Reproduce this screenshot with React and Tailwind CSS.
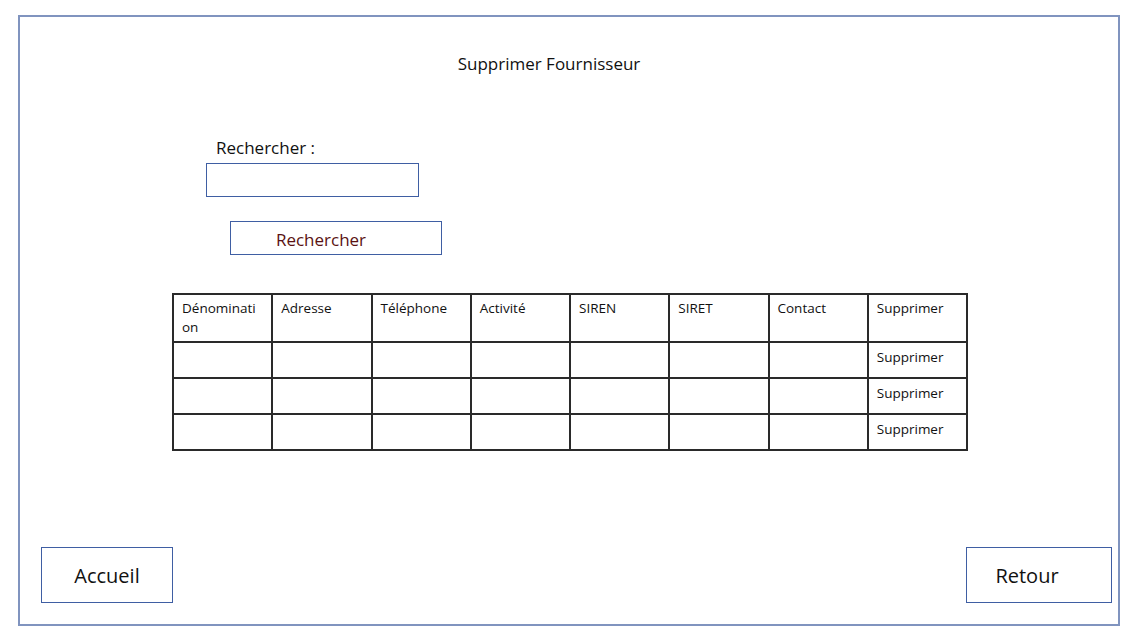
const columns = [
  "Dénominati on",
  "Adresse",
  "Téléphone",
  "Activité",
  "SIREN",
  "SIRET",
  "Contact",
  "Supprimer",
];

function Row() {
  return (
    <tr className="h-[36px]">
      {columns.slice(0, 7).map((c) => (
        <td key={c} className="border-2 border-[#2a2a2a]" />
      ))}
      <td className="border-2 border-[#2a2a2a] px-[8px] align-top pt-[5px]">
        Supprimer
      </td>
    </tr>
  );
}

export default function App() {
  return (
    <div className="h-[637px] w-[1132px] bg-white pl-[18px] pt-[15px] font-['Open_Sans',sans-serif] text-[#111]">
      <div className="flex h-[611px] w-[1102px] flex-col border-2 border-[#8094bf]">
        <h1 className="mt-[35px] pr-[40px] text-center text-[17px] leading-[24px]">
          Supprimer Fournisseur
        </h1>

        <div className="ml-[186px] mt-[60px] flex flex-col">
          <label className="ml-[10px] text-[17px] leading-[24px]">Rechercher :</label>
          <div className="mt-[3px] h-[34px] w-[213px] border border-[#3f5ea3]" />
          <button
            type="button"
            className="ml-[24px] mt-[24px] h-[34px] w-[212px] border border-[#3f5ea3] pr-[30px] pt-[3px] text-[17px] text-[#5a1212]"
          >
            Rechercher
          </button>
        </div>

        <table className="ml-[152px] mt-[38px] w-[796px] table-fixed border-collapse text-[13.5px] leading-[19px]">
          <thead>
            <tr className="h-[48px]">
              {columns.map((c) => (
                <th
                  key={c}
                  className="border-2 border-[#2a2a2a] px-[8px] pt-[4px] text-left align-top font-normal break-all"
                >
                  {c === "Dénominati on" ? (
                    <>
                      Dénominati
                      <br />
                      on
                    </>
                  ) : (
                    c
                  )}
                </th>
              ))}
            </tr>
          </thead>
          <tbody>
            <Row />
            <Row />
            <Row />
          </tbody>
        </table>

        <div className="mt-auto mb-[21px] flex items-end justify-between pl-[21px] pr-[6px]">
          <button
            type="button"
            className="h-[56px] w-[132px] border border-[#3f5ea3] pt-[2px] text-[20px]"
          >
            Accueil
          </button>
          <button
            type="button"
            className="h-[56px] w-[146px] border border-[#3f5ea3] pr-[24px] pt-[2px] text-[20px]"
          >
            Retour
          </button>
        </div>
      </div>
    </div>
  );
}
